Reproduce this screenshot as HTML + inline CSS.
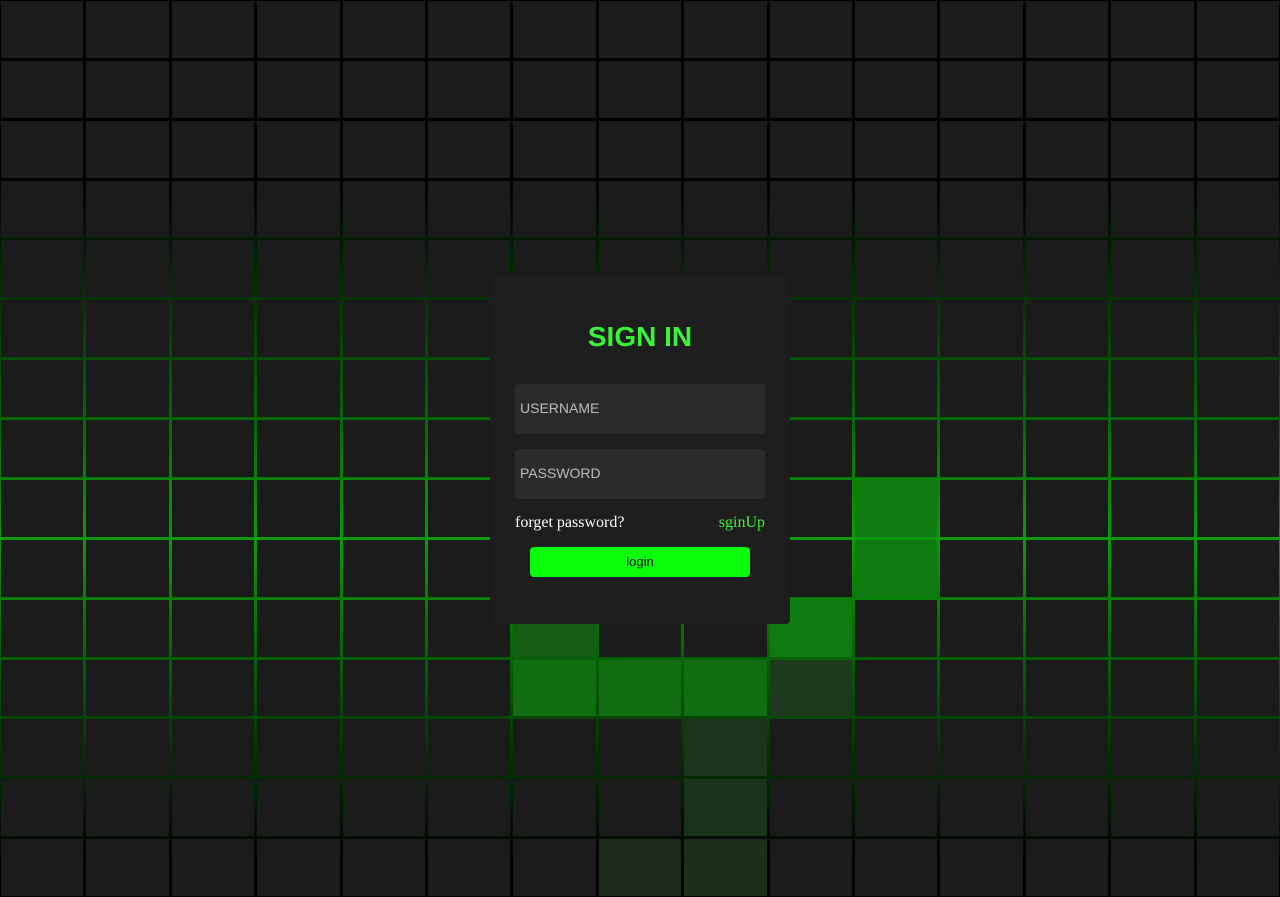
<!DOCTYPE html>
<html><head><meta charset="utf-8"><style>
*{margin:0;padding:0;box-sizing:border-box}
html,body{width:1280px;height:897px;overflow:hidden;background:#000}
.grid{position:absolute;inset:0;display:grid;grid-template-columns:repeat(15,1fr);grid-template-rows:repeat(15,1fr);gap:3px;padding:1px;
background:linear-gradient(to bottom,#000 0%,#000 20%,#0a9a0a 60%,#000 96%,#000 100%)}
.grid span{background:#1b1b1b}
.card{position:absolute;left:490px;top:274px;width:300px;height:350px;background:#1e1e1e;border-radius:4px;font-family:"Liberation Sans",sans-serif}
h2{position:absolute;top:47px;width:100%;text-align:center;color:#3af23a;font-size:28px;font-weight:bold}
.in{position:absolute;left:25px;width:250px;height:50px;background:#2b2b2b;border-radius:4px;color:#bbb;font-size:14px;line-height:48px;padding-left:5px}
.links{position:absolute;left:25px;width:250px;top:240px;font-family:"Liberation Serif",serif;font-size:16px;display:flex;justify-content:space-between}
.btn{position:absolute;left:40px;top:273px;width:220px;height:30px;background:#0aff0a;border-radius:4px;text-align:center;line-height:30px;font-size:13px;color:#111}
</style></head><body>
<div class="grid" id="g"></div>
<div class="card">
<h2>SIGN IN</h2>
<div class="in" style="top:110px">USERNAME</div>
<div class="in" style="top:175px">PASSWORD</div>
<div class="links"><span style="color:#fff">forget password?</span><span style="color:#3af23a">sginUp</span></div>
<div class="btn">login</div>
</div>
<script>
var c={"8,10":"#0f7a0f","9,10":"#0f7a0f","10,9":"#0f7a0f","10,6":"#155c15","11,6":"#106e10","11,7":"#106e10","11,8":"#106e10","11,9":"#1d3a1d","12,8":"#1b351b","13,8":"#1b321b","14,7":"#1b2a1b","14,8":"#1b301b"};
var g=document.getElementById('g'),h='';
for(var r=0;r<15;r++)for(var k=0;k<15;k++){var s=c[r+","+k];h+='<span'+(s?' style="background:'+s+'"':'')+'></span>';}
g.innerHTML=h;
</script>
</body></html>
